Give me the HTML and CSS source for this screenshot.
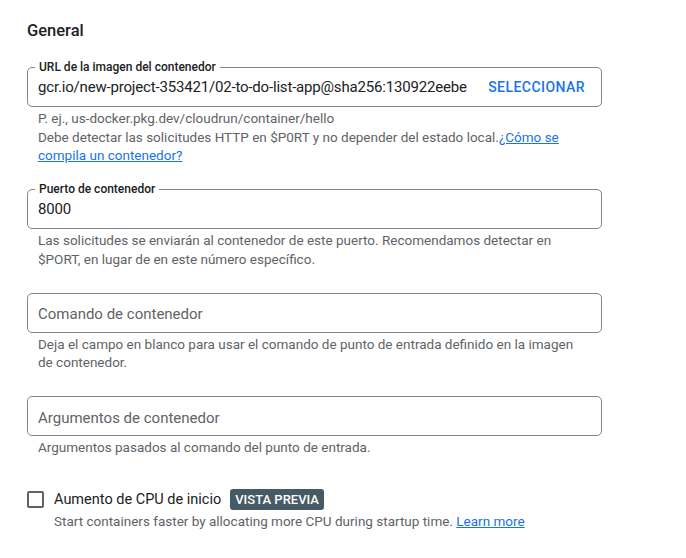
FILE: index.html
```html
<!DOCTYPE html>
<html lang="es">
<head>
<meta charset="utf-8">
<link rel="stylesheet" href="styles.css">
</head>
<body>
<div class="page">
  <h2 class="title">General</h2>

  <div class="field field-first">
    <div class="box">
      <span class="flabel">URL de la imagen del contenedor</span>
      <span class="value">gcr.io/new-project-353421/02-to-do-list-app@sha256:130922eebe</span>
      <span class="btn">SELECCIONAR</span>
    </div>
    <div class="hint">P. ej., us-docker.pkg.dev/cloudrun/container/hello<br>Debe detectar las solicitudes HTTP en $P0RT y no depender del estado local.<a class="link" href="#">¿Cómo se compila un contenedor?</a></div>
  </div>

  <div class="field">
    <div class="box">
      <span class="flabel">Puerto de contenedor</span>
      <span class="value">8000</span>
    </div>
    <div class="hint">Las solicitudes se enviarán al contenedor de este puerto. Recomendamos detectar en $PORT, en lugar de en este número específico.</div>
  </div>

  <div class="field">
    <div class="box">
      <span class="placeholder">Comando de contenedor</span>
    </div>
    <div class="hint">Deja el campo en blanco para usar el comando de punto de entrada definido en la imagen de contenedor.</div>
  </div>

  <div class="field">
    <div class="box">
      <span class="placeholder">Argumentos de contenedor</span>
    </div>
    <div class="hint">Argumentos pasados al comando del punto de entrada.</div>
  </div>

  <div class="check-row">
    <span class="checkbox"></span>
    <div class="check-text">
      <div class="check-label">Aumento de CPU de inicio <span class="badge">VISTA PREVIA</span></div>
      <div class="check-hint">Start containers faster by allocating more CPU during startup time. <a class="link" href="#">Learn more</a></div>
    </div>
  </div>
</div>
</body>
</html>
```

FILE: styles.css
```css
* { box-sizing: border-box; }
html, body { margin: 0; padding: 0; background: #fff; }
body {
  font-family: Roboto, "Liberation Sans", Arial, sans-serif;
  color: #202124;
}
.page {
  width: 575px;
  margin-left: 27px;
  padding-top: 20px;
}
.title {
  margin: 0;
  font-size: 16.5px;
  font-weight: 500;
  line-height: 22px;
  color: #202124;
}
.field { margin-top: 24.5px; }
.field-first { margin-top: 25px; }
.box {
  position: relative;
  height: 40px;
  border: 1px solid #80868b;
  border-radius: 5px;
  display: flex;
  align-items: center;
  padding: 0 16px 0 0;
}
.flabel {
  position: absolute;
  top: -9px;
  left: 7px;
  padding: 0 4px;
  background: #fff;
  font-size: 12px;
  font-weight: 500;
  line-height: 16px;
  color: #202124;
}
.value {
  flex: 1;
  padding-left: 10px;
  font-size: 15px;
  letter-spacing: -0.18px;
  line-height: 20px;
  color: #202124;
  white-space: nowrap;
}
.placeholder {
  flex: 1;
  padding-left: 10px;
  padding-top: 3px;
  font-size: 15px;
  line-height: 20px;
  color: #5f6368;
}
.btn {
  font-size: 14px;
  font-weight: 500;
  letter-spacing: 0.45px;
  color: #1a73e8;
}
.hint {
  padding: 2px 16px 0 11px;
  font-size: 13.5px;
  line-height: 18.5px;
  color: #5f6368;
}
.link {
  color: #1a73e8;
  text-decoration: underline;
}
.check-row {
  margin-top: 32px;
  display: flex;
  align-items: flex-start;
}
.checkbox {
  width: 17px;
  height: 17px;
  border: 2px solid #5f6368;
  border-radius: 2px;
  margin-top: 2px;
  flex: none;
}
.check-text { margin-left: 10px; }
.check-label {
  font-size: 14.5px;
  line-height: 21px;
  color: #202124;
  display: flex;
  align-items: center;
}
.badge {
  margin-left: 9px;
  display: inline-block;
  background: #455a64;
  color: #fff;
  font-size: 13px;
  font-weight: 500;
  line-height: 21px;
  padding: 0 5px;
  border-radius: 3px;
}
.check-hint {
  margin-top: 2px;
  font-size: 13.5px;
  line-height: 18px;
  color: #5f6368;
}
```
